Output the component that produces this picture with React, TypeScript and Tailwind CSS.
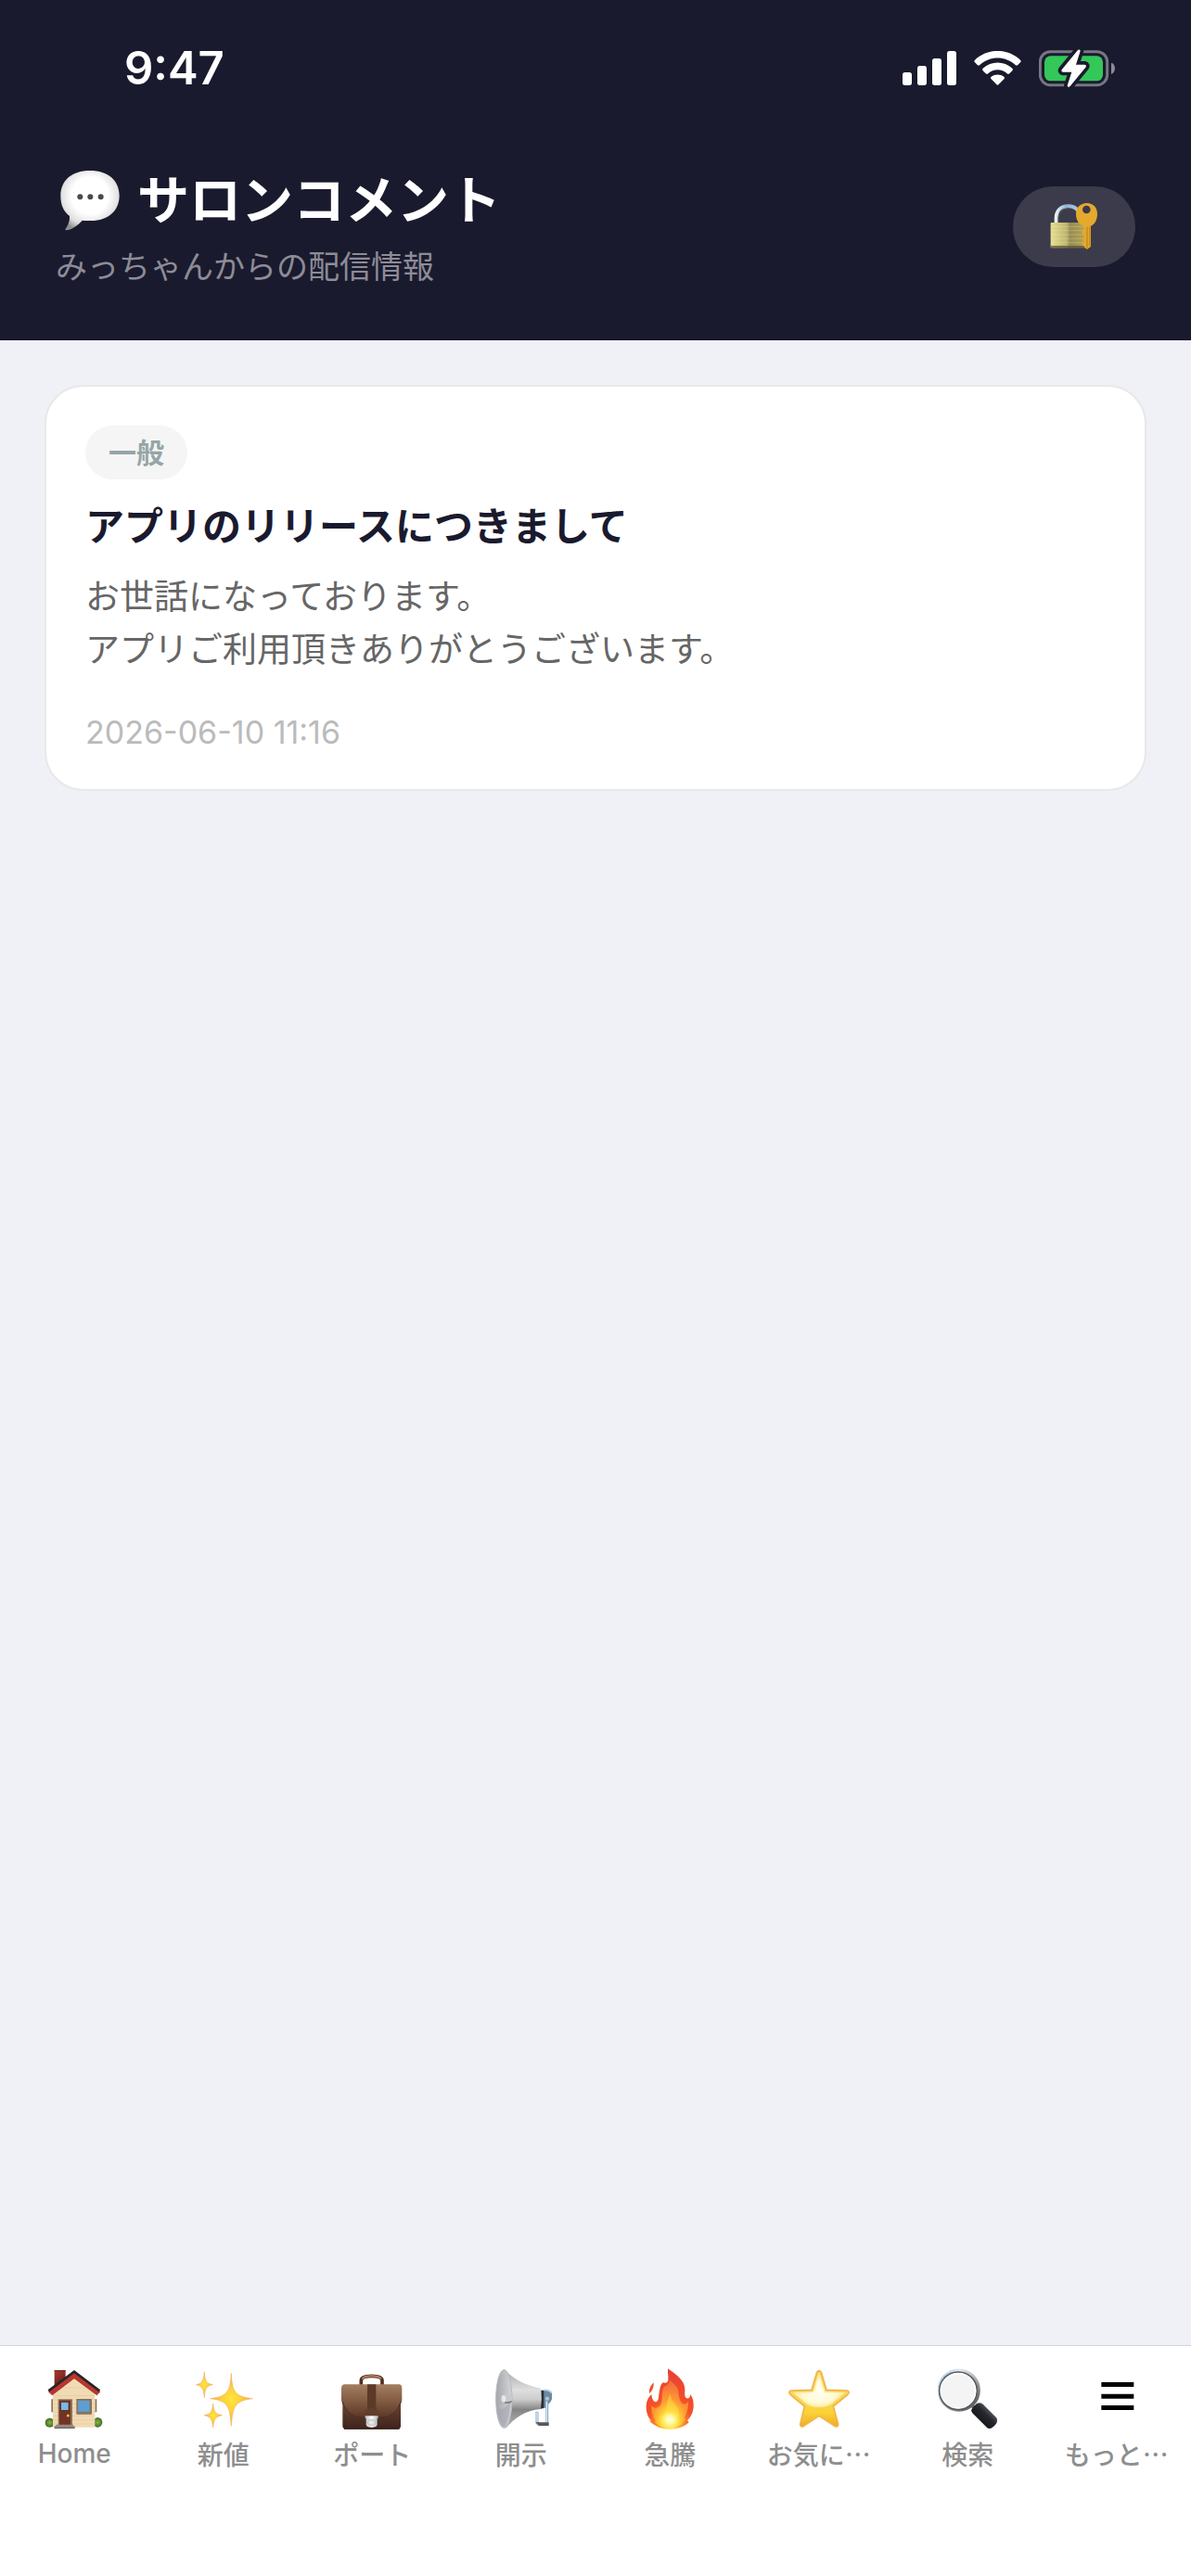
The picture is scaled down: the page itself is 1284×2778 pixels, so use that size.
import type { ReactNode } from 'react';

function SpeechBubble() {
  return (
    <svg className="size-[66px] shrink-0" viewBox="42 39 198 198" aria-hidden="true">
      <defs>
        <radialGradient id="bubble" cx="0.5" cy="0.42" r="0.62">
          <stop offset="0.5" stopColor="#ffffff" />
          <stop offset="0.8" stopColor="#dedede" />
          <stop offset="1" stopColor="#8f8f8f" />
        </radialGradient>
      </defs>
      <path
        d="M141 42C200 42 236 74 236 123C236 172 200 204 145 204C135 204 124 204 116 203C102 220 80 234 63 235C60 234 61 231 64 227C72 215 76 203 75 189C55 174 46 152 46 123C46 74 82 42 141 42Z"
        fill="url(#bubble)"
      />
      <circle cx="109" cy="127" r="9" fill="#4a4a4a" />
      <circle cx="142" cy="127" r="9" fill="#4a4a4a" />
      <circle cx="176" cy="127" r="9" fill="#4a4a4a" />
    </svg>
  );
}

function SignalIcon() {
  return (
    <svg className="h-[37px] w-[58px]" viewBox="219 162 174 111" fill="#fff" aria-hidden="true">
      <rect x="219" y="231" width="30" height="42" rx="8" />
      <rect x="267" y="210" width="30" height="63" rx="8" />
      <rect x="315" y="186" width="30" height="87" rx="8" />
      <rect x="363" y="162" width="30" height="111" rx="8" />
    </svg>
  );
}

function WifiIcon() {
  return (
    <svg className="h-[37px] w-[51px]" viewBox="450 162 153 111" fill="#fff" aria-hidden="true">
      <path d="M453 191C494 152 559 152 600 191Q604 195 600 199L592 207Q588 210 584 207C552 177 501 177 469 207Q465 210 461 207L453 199Q449 195 453 191Z" />
      <path d="M479 218C506 193 547 193 574 218Q578 222 574 226L565 235Q561 238 557 235C540 219 513 219 496 235Q492 238 488 235L479 226Q475 222 479 218Z" />
      <path d="M506 245C518 236 535 236 547 245Q551 249 547 253L530 270Q526.500 274 523 270L506 253Q502 249 506 245Z" />
    </svg>
  );
}

function BatteryIcon() {
  const bolt = 'M786 158Q793 154 794 161L780 205H808Q816 207 811 214L761 275Q753 281 752 273L766 229H738Q730 227 735 220Z';
  return (
    <svg className="h-[41px] w-[82px]" viewBox="660 155 246 123" aria-hidden="true">
      <rect x="664" y="163" width="217" height="108" rx="33" fill="none" stroke="#777683" strokeWidth="9" />
      <path d="M894 199C910 203 910 231 894 236Z" fill="#8b8a95" />
      <rect x="678" y="177" width="189" height="81" rx="20" fill="#34c759" />
      <path d={bolt} fill="#1a1a2e" stroke="#1a1a2e" strokeWidth="22" strokeLinejoin="round" />
      <path d={bolt} fill="#fff" />
    </svg>
  );
}

function LockKeyIcon() {
  return (
    <svg className="size-[52px]" viewBox="696 654 156 156" aria-hidden="true">
      <defs>
        <linearGradient id="lockBody">
          <stop offset="0" stopColor="#e5df92" />
          <stop offset="0.45" stopColor="#bdb570" />
          <stop offset="0.55" stopColor="#968b56" />
          <stop offset="1" stopColor="#b5a552" />
        </linearGradient>
        <linearGradient id="shackle">
          <stop offset="0" stopColor="#e8f2fb" />
          <stop offset="0.4" stopColor="#8fb2d8" />
          <stop offset="1" stopColor="#b9cce0" />
        </linearGradient>
      </defs>
      <path d="M716 722V706C716 680 732 667 755 667C778 667 794 682 795 706V722" fill="none" stroke="url(#shackle)" strokeWidth="12" />
      <path d="M723 720V706C723 686 736 675 755 675" fill="none" stroke="#665d50" strokeWidth="3" />
      <rect x="698" y="720" width="114" height="82" rx="3" fill="url(#lockBody)" />
      <path d="M699 733H810M699 746H810M699 759H810M699 772H810M699 785H810" stroke="#fff7b0" strokeOpacity="0.25" strokeWidth="3" />
      <path d="M699 798H810" stroke="#5c5230" strokeWidth="5" />
      <path
        fillRule="evenodd"
        d="M815 657C836 657 849 672 849 692C849 712 840 726 828 731V798L815 807L807 799L800 790L807 783L800 773L807 766L798 750L806 740V732C789 726 780 712 780 692C780 672 794 657 815 657ZM814 665A13 13 0 1 0 814 691A13 13 0 1 0 814 665Z"
        fill="#e4a92d"
      />
      <path d="M816 734V803" stroke="#b67d16" strokeWidth="3" />
      <path d="M824 733V797" stroke="#c98b1b" strokeWidth="4" />
    </svg>
  );
}

function HouseIcon() {
  return (
    <svg className="size-[66px]" viewBox="142 132 198 198" aria-hidden="true">
      <defs>
        <linearGradient id="chimney" x2="0.4" y2="1">
          <stop offset="0" stopColor="#a83c33" />
          <stop offset="1" stopColor="#6b1c18" />
        </linearGradient>
        <radialGradient id="bush">
          <stop offset="0" stopColor="#87b64a" />
          <stop offset="1" stopColor="#3c6b22" />
        </radialGradient>
      </defs>
      <rect x="177" y="138" width="36" height="52" rx="2" fill="url(#chimney)" />
      <path d="M177 140H213" stroke="#7c2822" strokeWidth="4" />
      <ellipse cx="162" cy="308" rx="15" ry="15" fill="url(#bush)" />
      <ellipse cx="317" cy="307" rx="15" ry="16" fill="url(#bush)" />
      <path d="M167 232H173V274H167ZM308 232H314V274H308Z" fill="#8c755f" />
      <path d="M172 208L241 155L308 208V323H172Z" fill="#f1dbb4" />
      <path d="M172 221H308M172 234H308M172 247H308M172 260H308M172 273H308M172 286H308M172 299H308M172 312H308M199 195H282" stroke="#e2c89d" strokeWidth="2" />
      <path d="M241 146L326 208L315 219L241 164L169 219L157 208Z" fill="#bf352d" />
      <path d="M241 164L315 219M241 164L169 219" stroke="#7d2a21" strokeWidth="2" />
      <path d="M158 205L241 143L323 205" fill="none" stroke="#252529" strokeWidth="8" />
      <rect x="189" y="232" width="46" height="84" fill="#8c7058" />
      <rect x="193" y="236" width="36" height="79" fill="#733322" />
      <rect x="198" y="241" width="25" height="27" fill="#79b9e6" stroke="#4b2419" strokeWidth="2" />
      <circle cx="221" cy="285" r="4.500" fill="#f0be4b" />
      <rect x="248" y="231" width="50" height="50" rx="2" fill="#87705b" />
      <rect x="252" y="235" width="40" height="39" fill="#5c9fd2" stroke="#8d755f" strokeWidth="3" />
      <path d="M182 314H238V319H243V326H177V319H182Z" fill="#94887f" />
      <path d="M177 325H243" stroke="#605850" strokeWidth="3" />
    </svg>
  );
}

function SparklesIcon() {
  return (
    <svg className="size-[66px]" viewBox="623 132 198 198" aria-hidden="true">
      <defs>
        <radialGradient id="spark">
          <stop offset="0" stopColor="#ffe43f" />
          <stop offset="0.45" stopColor="#fbd238" />
          <stop offset="1" stopColor="#f6a55c" />
        </radialGradient>
      </defs>
      <g fill="url(#spark)" stroke="#f8b163" strokeWidth="2">
        <path d="M747 148C750 204 755 224 816 230C757 237 752 255 747 319C742 255 737 237 679 230C738 224 743 204 747 148Z" />
        <path d="M660 143C662 174 666 181 687 185C666 189 662 197 660 227C657 197 653 189 633 185C653 181 657 174 660 143Z" />
        <path d="M688 246C691 274 695 280 717 284C695 289 691 296 688 324C685 296 681 289 660 284C681 280 685 274 688 246Z" />
      </g>
    </svg>
  );
}

function BriefcaseIcon() {
  return (
    <svg className="size-[66px]" viewBox="145 132 198 198" aria-hidden="true">
      <defs>
        <linearGradient id="caseBack" x2="0" y2="1">
          <stop offset="0" stopColor="#7b5540" />
          <stop offset="1" stopColor="#3e231b" />
        </linearGradient>
        <linearGradient id="caseFlap" x2="0" y2="1">
          <stop offset="0" stopColor="#a47e60" />
          <stop offset="0.5" stopColor="#825b43" />
          <stop offset="1" stopColor="#5c3728" />
        </linearGradient>
        <linearGradient id="clasp">
          <stop offset="0" stopColor="#bdbdbd" />
          <stop offset="0.5" stopColor="#ffffff" />
          <stop offset="1" stopColor="#b4b4b4" />
        </linearGradient>
      </defs>
      <path d="M209 186V172C209 163 219 157 243 157C267 157 277 163 277 172V186" fill="none" stroke="#51301f" strokeWidth="11" />
      <path d="M212 166C222 154 264 154 274 166" fill="none" stroke="#b5805f" strokeWidth="6" />
      <path d="M149 205H337V319Q337 328 328 328H158Q149 328 149 319Z" fill="url(#caseBack)" />
      <path d="M153 184H334Q341 186 341 194V236C329 272 309 291 280 291H206C178 291 157 272 145 236V194Q146 186 153 184Z" fill="url(#caseFlap)" />
      <path d="M148 240C162 274 179 289 206 291H280C307 289 325 274 338 240" fill="none" stroke="#4b2b20" strokeWidth="3" />
      <path d="M229 184H257V264H229Z" fill="#5c3a28" />
      <path d="M220 286V279C222 267 231 262 243 262C255 262 264 267 265 279V286Z" fill="#623e2d" />
      <path d="M222 286H264V294H261V316Q259 323 243 323Q227 323 225 316V294H222Z" fill="url(#clasp)" />
      <rect x="231" y="299" width="23" height="17" rx="7" fill="#e5e5e5" stroke="#a6a6a6" strokeWidth="2" />
      <path d="M154 328H333" stroke="#2d1914" strokeWidth="3" />
    </svg>
  );
}

function MegaphoneIcon() {
  return (
    <svg className="size-[66px]" viewBox="626 132 198 198" aria-hidden="true">
      <defs>
        <linearGradient id="horn" x2="0" y2="1">
          <stop offset="0" stopColor="#a8a8a8" />
          <stop offset="0.35" stopColor="#dedede" />
          <stop offset="0.5" stopColor="#cfcfcf" />
          <stop offset="0.68" stopColor="#858585" />
          <stop offset="1" stopColor="#b8b8b8" />
        </linearGradient>
        <linearGradient id="hornMouth">
          <stop offset="0" stopColor="#a4a6ab" />
          <stop offset="1" stopColor="#d4d5d8" />
        </linearGradient>
      </defs>
      <path d="M788 203C803 198 824 203 825 218C826 234 820 243 812 248L805 260H788Z" fill="#6d8ba4" />
      <path d="M792 204C803 200 817 203 823 211" fill="none" stroke="#b9d2e4" strokeWidth="5" />
      <path d="M776 272V308L780 313H808V229" fill="none" stroke="#8aa7bf" strokeWidth="9" />
      <path d="M776 274V306M807 234V308" stroke="#dcecf7" strokeWidth="4" />
      <path d="M771 306L783 318H814V307H784" fill="#55585c" />
      <circle cx="809" cy="230" r="8" fill="#afc4d5" stroke="#5f7485" strokeWidth="2" />
      <path d="M790 204H798V261L787 263Z" fill="#2b2d30" />
      <path d="M670 135C691 158 726 185 788 197Q793 231 788 264C736 268 704 293 674 327Z" fill="url(#horn)" />
      <ellipse cx="669" cy="231" rx="26" ry="94" fill="url(#hornMouth)" stroke="#b9b9bb" strokeWidth="3" />
      <path d="M690 231C690 270 684 302 669 322C655 304 648 282 646 258C661 274 681 256 690 231Z" fill="#a5a9b2" opacity="0.65" />
      <rect x="661" y="218" width="34" height="27" rx="9" fill="#c9c9ca" />
      <path d="M663 239Q676 248 694 239" fill="none" stroke="#7c7d80" strokeWidth="5" />
      <ellipse cx="668" cy="231" rx="7" ry="12" fill="#e6e6e6" />
    </svg>
  );
}

function FlameIcon() {
  return (
    <svg className="size-[66px]" viewBox="148 132 198 198" aria-hidden="true">
      <defs>
        <radialGradient id="flameOuter" cx="0.5" cy="0.95" r="0.85">
          <stop offset="0" stopColor="#ffe94a" />
          <stop offset="0.3" stopColor="#fd9a29" />
          <stop offset="0.55" stopColor="#f65125" />
          <stop offset="1" stopColor="#ea4333" />
        </radialGradient>
        <radialGradient id="flameInner" cx="0.5" cy="0.88" r="0.85">
          <stop offset="0" stopColor="#fff9b0" />
          <stop offset="0.25" stopColor="#ffdf3a" />
          <stop offset="0.55" stopColor="#fd9b33" />
          <stop offset="1" stopColor="#f5683c" />
        </radialGradient>
        <radialGradient id="flameCore">
          <stop offset="0" stopColor="#fffde6" />
          <stop offset="0.4" stopColor="#fff9a8" />
          <stop offset="1" stopColor="#ffe94a" stopOpacity="0" />
        </radialGradient>
      </defs>
      <path d="M195 178C196 193 191 206 181 213C179 199 186 187 195 178Z" fill="#ef5030" />
      <path id="flameShape" d="M241 133C266 151 294 169 296 198C297 211 293 222 301 229C309 231 314 225 314 216C322 226 325 243 324 257C322 277 314 291 304 300L309 307C295 322 271 329 247 329C219 329 196 319 180 301L188 303C176 290 170 272 171 252C172 237 178 225 188 216C189 228 193 240 202 241C213 240 210 222 214 204C216 193 219 183 225 178C233 181 240 179 242 170C243 158 240 146 241 133Z" fill="url(#flameOuter)" />
      <path d="M246 169C259 180 273 191 275 206C277 225 279 242 292 248C303 247 306 242 307 238C309 255 302 280 294 291L299 297C286 316 269 326 247 327C225 326 207 317 197 302L204 304C192 290 186 270 188 252C195 263 208 263 216 252C228 237 217 209 229 192C239 188 247 180 246 169Z" fill="url(#flameInner)" />
      <path d="M250 215C249 239 272 250 276 271C281 292 270 325 247 327C225 326 210 302 214 281C218 290 224 291 228 286C238 269 235 234 250 215Z" fill="#ffe23f" opacity="0.5" />
      <ellipse cx="248" cy="298" rx="34" ry="31" fill="url(#flameCore)" />
    </svg>
  );
}

function StarIcon() {
  return (
    <svg className="size-[66px]" viewBox="629 132 198 198" aria-hidden="true">
      <defs>
        <linearGradient id="star" x2="0" y2="1">
          <stop offset="0" stopColor="#f9cf5e" />
          <stop offset="0.5" stopColor="#f7d65c" />
          <stop offset="0.75" stopColor="#fbd236" />
          <stop offset="1" stopColor="#f0aa28" />
        </linearGradient>
        <radialGradient id="starShine" cx="0.5" cy="0.55" r="0.6">
          <stop offset="0" stopColor="#fffef0" />
          <stop offset="0.55" stopColor="#fffbd8" />
          <stop offset="1" stopColor="#fff2b0" stopOpacity="0.5" />
        </radialGradient>
      </defs>
      <path
        d="M721 145Q728 135 735 145L752 202L818 204Q829 207 821 217L774 255L790 313Q790 323 780 320L728 286L677 320Q667 323 667 313L681 255L635 217Q627 207 638 204L704 202Z"
        fill="url(#star)"
        stroke="#f1b448"
        strokeWidth="5"
        strokeLinejoin="round"
      />
      <path d="M728 150L746 209L808 212L771 243C758 253 743 256 728 256C713 256 698 253 685 243L648 212L710 209Z" fill="url(#starShine)" stroke="#fff3b5" strokeOpacity="0.6" strokeWidth="5" strokeLinejoin="round" />
    </svg>
  );
}

function MagnifierIcon() {
  return (
    <svg className="size-[66px]" viewBox="169 132 198 198" aria-hidden="true">
      <defs>
        <linearGradient id="rim" x2="1" y2="1">
          <stop offset="0" stopColor="#8ebcec" />
          <stop offset="0.25" stopColor="#e2eaf2" />
          <stop offset="0.6" stopColor="#aaa8a7" />
          <stop offset="1" stopColor="#474747" />
        </linearGradient>
        <linearGradient id="handle" x1="0" y1="1" x2="1" y2="0">
          <stop offset="0" stopColor="#050607" />
          <stop offset="0.55" stopColor="#25272c" />
          <stop offset="0.75" stopColor="#5a5c63" />
          <stop offset="1" stopColor="#131418" />
        </linearGradient>
      </defs>
      <path d="M280 258L289 249" stroke="#60666d" strokeWidth="15" />
      <circle cx="240" cy="203" r="64" fill="#f4f4f4" stroke="url(#rim)" strokeWidth="11" />
      <circle cx="238" cy="205" r="61" fill="none" stroke="#55595d" strokeWidth="5" />
      <circle cx="238" cy="205" r="56" fill="none" stroke="#ffffff" strokeWidth="4" />
      <path d="M192 174C213 143 263 141 285 174" fill="none" stroke="#fff" strokeWidth="4" />
      <path d="M297 247Q310 239 319 249L361 291Q369 302 358 315Q343 332 332 325L284 277Q277 268 284 261Z" fill="url(#handle)" />
    </svg>
  );
}

function MenuIcon() {
  return (
    <svg className="size-[66px]" viewBox="650 132 198 198" aria-hidden="true">
      <path d="M699 177H804V192H699ZM699 215H804V230H699ZM699 252H804V267H699Z" fill="#000" />
    </svg>
  );
}

const tabs: { label: string; icon: ReactNode; font: string }[] = [
  { label: 'Home', icon: <HouseIcon />, font: 'font-[Inter,sans-serif]' },
  { label: '新値', icon: <SparklesIcon />, font: "font-['Noto_Sans_CJK_JP',sans-serif]" },
  { label: 'ポート', icon: <BriefcaseIcon />, font: "font-['Noto_Sans_CJK_JP',sans-serif]" },
  { label: '開示', icon: <MegaphoneIcon />, font: "font-['Noto_Sans_CJK_JP',sans-serif]" },
  { label: '急騰', icon: <FlameIcon />, font: "font-['Noto_Sans_CJK_JP',sans-serif]" },
  { label: 'お気に…', icon: <StarIcon />, font: "font-['Noto_Sans_CJK_JP',sans-serif]" },
  { label: '検索', icon: <MagnifierIcon />, font: "font-['Noto_Sans_CJK_JP',sans-serif]" },
  { label: 'もっと…', icon: <MenuIcon />, font: "font-['Noto_Sans_CJK_JP',sans-serif]" },
];

function StatusBar() {
  return (
    <div className="flex h-[146px] items-center justify-between pl-[134px] pr-[82px]">
      <span className="text-[49px] leading-none font-semibold">9:47</span>
      <div className="flex items-center gap-[19px]">
        <SignalIcon />
        <WifiIcon />
        <BatteryIcon />
      </div>
    </div>
  );
}

export default function App() {
  return (
    <div lang="ja" className="flex min-h-screen flex-col bg-[#f0f1f6] font-[Inter,'Noto_Sans_CJK_JP',sans-serif]">
      <header className="bg-[#1a1a2e] text-white">
        <StatusBar />
        <div className="flex items-center justify-between px-[60px] pt-8 pb-[57px]">
          <div>
            <h1 className="flex items-center gap-[18px] pl-1 text-[56px] leading-[76px] font-bold">
              <SpeechBubble />
              サロンコメント
            </h1>
            <p className="mt-3 text-[34px] leading-[44px] text-[#8d8c97]">みっちゃんからの配信情報</p>
          </div>
          <button
            type="button"
            aria-label="ロック"
            className="flex h-[87px] w-[132px] items-center justify-center rounded-full bg-[#3c3b4b]"
          >
            <LockKeyIcon />
          </button>
        </div>
      </header>

      <main className="grow px-12 py-12">
        <article className="rounded-[42px] border-2 border-[#e8e8e8] bg-white p-[42px]">
          <span className="inline-block rounded-full bg-[#f5f5f5] px-[25px] align-top text-[30px] leading-[58px] font-bold text-[#95a5a6]">
            一般
          </span>
          <h2 className="mt-[26px] text-[42px] leading-[50px] font-bold text-[#1a1a2e]">アプリのリリースにつきまして</h2>
          <p className="mt-[22px] text-[37px] leading-[57px] text-[#666]">
            お世話になっております。
            <br />
            アプリご利用頂きありがとうございます。
          </p>
          <time className="mt-[42px] block text-[34px] leading-[38px] text-[#bbb]">2026-06-10 11:16</time>
        </article>
      </main>

      <nav className="grid grid-cols-8 border-t border-[#d6d6d8] bg-white pt-6 pb-[112px]">
        {tabs.map((tab) => (
          <a key={tab.label} href="#" className="flex flex-col items-center gap-[6px]">
            {tab.icon}
            <span className={`${tab.font} text-[28px] leading-10 font-medium whitespace-nowrap text-[#8e8e8e]`}>
              {tab.label}
            </span>
          </a>
        ))}
      </nav>
    </div>
  );
}
